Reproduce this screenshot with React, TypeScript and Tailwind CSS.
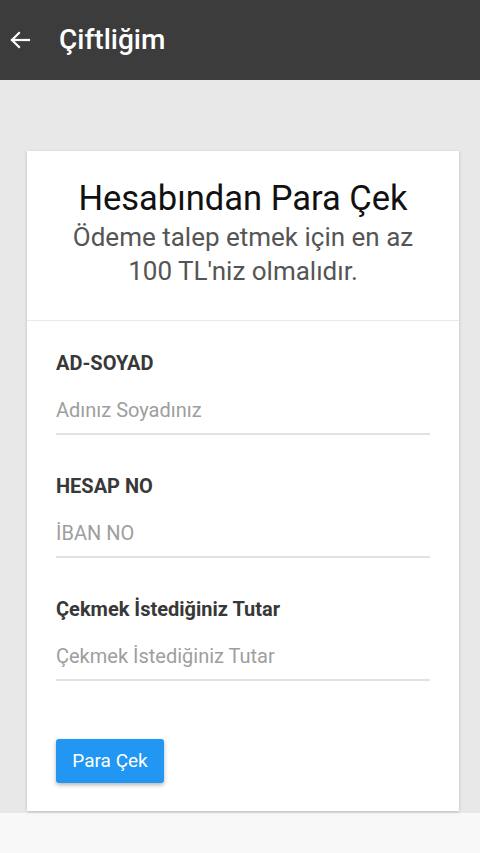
import React from 'react';

const fields = [
  { label: 'AD-SOYAD', placeholder: 'Adınız Soyadınız' },
  { label: 'HESAP NO', placeholder: 'İBAN NO' },
  { label: 'Çekmek İstediğiniz Tutar', placeholder: 'Çekmek İstediğiniz Tutar' },
];

export default function App() {
  return (
    <div className="w-[480px] h-[853px] flex flex-col bg-[#f8f8f8] overflow-hidden" style={{ fontFamily: 'Roboto, "Noto Sans", sans-serif' }}>
      <header className="h-[80px] bg-[#3c3c3c] flex items-center shrink-0">
        <button className="ml-[7px] w-[26px] h-[26px] flex items-center justify-center text-white">
          <svg width="24" height="24" viewBox="0 0 24 24" fill="none" stroke="currentColor" strokeWidth="2.2" strokeLinecap="square">
            <path d="M21 12H4" />
            <path d="M11 5l-7 7 7 7" />
          </svg>
        </button>
        <h1 className="ml-[26px] text-white text-[28px] font-medium">Çiftliğim</h1>
      </header>

      <main className="bg-[#e8e8e8] h-[733px] pt-[71px]">
        <div className="ml-[27px] w-[432px] bg-white shadow-[0_1px_3px_rgba(0,0,0,0.2)]">
          <div className="pt-[28px] pb-[32px] border-b border-[#e9e9e9] text-center">
            <h2 className="text-[34.5px] leading-[38px] text-[#111]">Hesabından Para Çek</h2>
            <p className="mt-[3px] text-[26px] leading-[34px] text-[#555]">
              Ödeme talep etmek için en az
              <br />
              100 TL'niz olmalıdır.
            </p>
          </div>

          <form className="px-[29px] pt-[30px] pb-[28px]" onSubmit={(e) => e.preventDefault()}>
            {fields.map((f, i) => (
              <div key={f.label} className={i > 0 ? 'mt-[39px]' : ''}>
                <label className="block text-[20px] leading-[24px] font-bold text-[#383838]">{f.label}</label>
                <input
                  className="mt-[12px] w-full h-[48px] border-b-2 border-[#e2e2e2] text-[20px] text-[#333] placeholder:text-[#9e9e9e] outline-none"
                  placeholder={f.placeholder}
                />
              </div>
            ))}
            <button className="mt-[58px] w-[108px] h-[44px] rounded-[3px] bg-[#2196f3] text-white text-[19px] shadow-[0_2px_4px_rgba(0,0,0,0.3)]">
              Para Çek
            </button>
          </form>
        </div>
      </main>
    </div>
  );
}
